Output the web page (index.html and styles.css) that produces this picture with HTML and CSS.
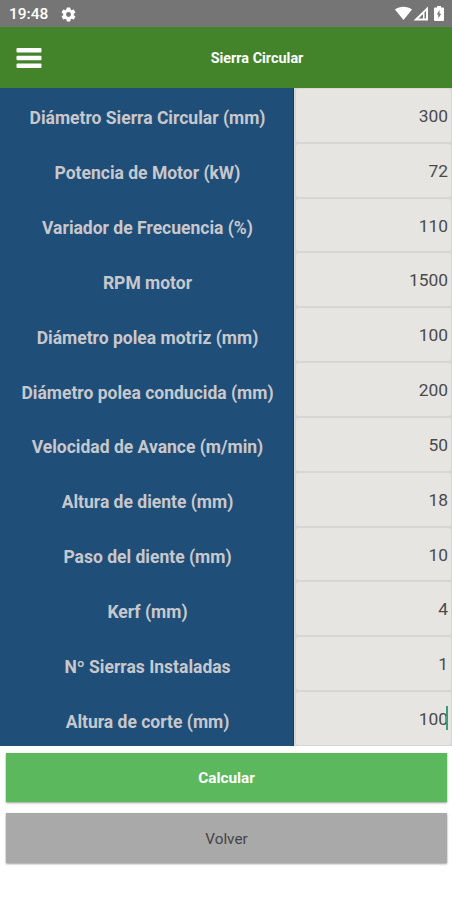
FILE: index.html
```html
<!DOCTYPE html>
<html lang="es">
<head>
<meta charset="utf-8">
<title>Sierra Circular</title>
<link rel="stylesheet" href="styles.css">
</head>
<body>
<div class="status">
  <span class="clock">19:48</span>
  <svg class="gear" viewBox="0 0 24 24"><path fill="#fff" fill-rule="evenodd" d="M19.43 12.98c.04-.32.07-.64.07-.98s-.03-.66-.07-.98l2.11-1.65c.19-.15.24-.42.12-.64l-2-3.46c-.12-.22-.39-.3-.61-.22l-2.49 1c-.52-.4-1.08-.73-1.69-.98l-.38-2.65A.49.49 0 0 0 14 2h-4c-.25 0-.46.18-.49.42l-.38 2.65c-.61.25-1.17.59-1.69.98l-2.49-1c-.23-.09-.49 0-.61.22l-2 3.46c-.13.22-.07.49.12.64l2.11 1.65c-.04.32-.07.65-.07.98s.03.66.07.98l-2.11 1.65c-.19.15-.24.42-.12.64l2 3.46c.12.22.39.3.61.22l2.49-1c.52.4 1.08.73 1.69.98l.38 2.65c.03.24.24.42.49.42h4c.25 0 .46-.18.49-.42l.38-2.65c.61-.25 1.17-.59 1.69-.98l2.49 1c.23.09.49 0 .61-.22l2-3.46c.12-.22.07-.49-.12-.64zM12 15.500a3.500 3.500 0 1 1 0-7 3.500 3.500 0 0 1 0 7z"/></svg>
  <svg class="signals" viewBox="0 0 50 16">
    <path fill="#fff" d="M0 3.600C4.800-.2 12.200-.2 17 3.600L8.500 14z"/>
    <path fill="#fff" fill-rule="evenodd" d="M18.500 14.500L33 .500V14.500zM23.500 12.600H28V8zM29.500 12.600H31V5L29.500 6.500z"/>
    <path fill="#fff" fill-rule="evenodd" d="M42 0h4v1.500h2q1 0 1 1V14q0 1-1 1h-8q-1 0-1-1V2.500q0-1 1-1h2zM44.500 4l-2.700 4.500h1.500V12.500l2.900-4.700h-1.700z"/>
  </svg>
</div>
<header class="bar">
  <svg class="menu" viewBox="0 0 26 22"><g fill="#fff"><rect x=".5" y="1" width="25" height="4.500" rx="1"/><rect x=".5" y="8.700" width="25" height="4.500" rx="1"/><rect x=".5" y="16.400" width="25" height="4.500" rx="1"/></g></svg>
  <h1>Sierra Circular</h1>
</header>
<main>
  <div class="form">
    <div class="row"><label>Diámetro Sierra Circular (mm)</label><div class="field">300</div></div>
    <div class="row"><label>Potencia de Motor (kW)</label><div class="field">72</div></div>
    <div class="row"><label>Variador de Frecuencia (%)</label><div class="field">110</div></div>
    <div class="row"><label>RPM motor</label><div class="field">1500</div></div>
    <div class="row"><label>Diámetro polea motriz (mm)</label><div class="field">100</div></div>
    <div class="row"><label>Diámetro polea conducida (mm)</label><div class="field">200</div></div>
    <div class="row"><label>Velocidad de Avance (m/min)</label><div class="field">50</div></div>
    <div class="row"><label>Altura de diente (mm)</label><div class="field">18</div></div>
    <div class="row"><label>Paso del diente (mm)</label><div class="field">10</div></div>
    <div class="row"><label>Kerf (mm)</label><div class="field">4</div></div>
    <div class="row"><label>Nº Sierras Instaladas</label><div class="field">1</div></div>
    <div class="row"><label>Altura de corte (mm)</label><div class="field active">100</div></div>
  </div>
  <div class="actions">
    <div class="button primary">Calcular</div>
    <div class="button">Volver</div>
  </div>
</main>
</body>
</html>
```
FILE: styles.css
```css
* { box-sizing: border-box; }
body { margin: 0; height: 900px; overflow: hidden; background: #fff; font-family: Roboto, "Liberation Sans", sans-serif; }
.status { height: 27px; background: #757575; display: flex; align-items: center; padding: 1px 7px 0 9px; color: #fff; }
.clock { font-size: 15.5px; font-weight: 500; line-height: 18px; width: 39px; white-space: nowrap; }
.gear { width: 17px; height: 17px; margin-left: 12px; }
.signals { width: 50px; height: 16px; margin-left: auto; }
.bar { height: 61px; background: #43842b; display: grid; grid-template-columns: 62px 1fr; align-items: center; }
.menu { width: 26px; height: 22px; margin-left: 16px; }
h1 { margin: 1px 0 0; color: #fff; font-size: 14.4px; font-weight: 700; text-align: center; }
.form { height: 658px; display: grid; grid-template-rows: repeat(12, 1fr); }
.row { display: grid; grid-template-columns: 294px 1fr; background: #d6d6d4; }
label { display: flex; align-items: center; justify-content: center; padding: 6px 0 0 2px; background: #1f4e79; border-right: 1px solid #123c70; color: #c8c8cc; font-size: 17.5px; font-weight: 700; white-space: nowrap; }
.field { display: flex; align-items: center; justify-content: flex-end; margin: 1px 1px 1px 2px; padding: 1px 3px 0 0; border-radius: 3px; background: #e6e5e1; color: #4a4a4a; font-size: 17.4px; position: relative; }
.active::after { content: ""; position: absolute; right: 3px; top: 14px; width: 2px; height: 24px; background: #3b9b80; }
.actions { display: grid; gap: 11px; padding: 7px 5px 0 6px; }
.button { height: 50px; display: flex; align-items: center; justify-content: center; padding-top: 1px; background: #a9a9a9; color: #444; font-size: 15.3px; box-shadow: 0 1px 2px rgba(0,0,0,.4); }
.primary { height: 49px; background: #5cb85c; color: #fff; font-weight: 700; }
```
